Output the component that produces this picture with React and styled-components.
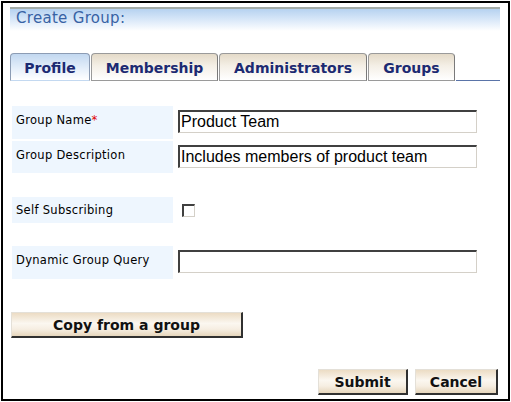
import React, { useState } from 'react'
import styled, { createGlobalStyle } from 'styled-components'

const GlobalStyle = createGlobalStyle`
  html, body {
    margin: 0;
    padding: 0;
    background: #fff;
  }
`

const Frame = styled.div`
  box-sizing: border-box;
  margin: 1px;
  width: 509px;
  height: 400px;
  border: 2px solid #000;
  padding: 4px 8px 0 7px;
  display: flex;
  flex-direction: column;
  font-family: 'DejaVu Sans', Verdana, sans-serif;
`

const Header = styled.div`
  box-sizing: border-box;
  height: 24px;
  border-top: 2px solid #a4aca8;
  background: linear-gradient(to bottom, #b6d2f0 0%, #d6e6f8 45%, #ffffff 100%);
  color: #3762a4;
  font-size: 15px;
  line-height: 19px;
  padding-left: 6px;
  letter-spacing: 0.3px;
`

const TabBar = styled.div`
  display: flex;
  align-items: flex-end;
  margin-top: 22px;
  height: 28px;
`

const Tab = styled.div`
  box-sizing: border-box;
  width: ${(p) => p.w}px;
  height: 28px;
  border: 1px solid ${(p) => (p.active ? '#8c9cb4' : '#9a9a9a')};
  border-bottom: ${(p) => (p.active ? '1px solid transparent' : '1px solid #9a9a9a')};
  border-right-color: ${(p) => (p.active ? '#8c9cb4' : '#7a7a7a')};
  border-radius: 4px 4px 0 0;
  background: ${(p) =>
    p.active
      ? 'linear-gradient(to bottom, #c2d8f0 0%, #e4eefa 55%, #ffffff 100%)'
      : 'linear-gradient(to bottom, #e4dac8 0%, #f4efe6 45%, #ffffff 100%)'};
  color: #1c2a72;
  font-weight: bold;
  font-size: 14px;
  display: flex;
  align-items: center;
  justify-content: center;
  padding-top: 1px;
  margin-right: 1px;
`

const TabFill = styled.div`
  flex: 1;
  border-bottom: 1px solid #5a74a8;
`

const Form = styled.div`
  margin-top: 25px;
  padding-left: 2px;
  display: flex;
  flex-direction: column;
`

const Row = styled.div`
  display: flex;
  margin-top: ${(p) => p.gap || 0}px;
  height: ${(p) => p.h}px;
`

const Label = styled.div`
  box-sizing: border-box;
  width: 161px;
  background: #eef6fe;
  font-size: 11.5px;
  color: #000;
  padding: ${(p) => p.pt || 7}px 4px 0 4px;
  letter-spacing: 0.3px;
`

const Star = styled.span`
  color: #e00000;
`

const Field = styled.div`
  padding: ${(p) => p.pt || 4}px 0 0 ${(p) => p.pl || 5}px;
`

const TextInput = styled.input`
  box-sizing: border-box;
  width: 299px;
  height: 23px;
  border-style: solid;
  border-width: 2px 1px 1px 2px;
  border-color: #404040 #d4d0c8 #d4d0c8 #404040;
  outline: none;
  padding: 0 1px;
  font-family: 'Liberation Sans', Arial, sans-serif;
  font-size: 16px;
  color: #000;
  background: #fff;
`

const Check = styled.span`
  box-sizing: border-box;
  display: block;
  width: 13px;
  height: 13px;
  border-style: solid;
  border-width: 2px 1px 1px 2px;
  border-color: #404040 #d4d0c8 #d4d0c8 #404040;
  background: #fff;
  cursor: pointer;
`

const Button = styled.button`
  box-sizing: border-box;
  width: ${(p) => p.w}px;
  height: 26px;
  border-style: solid;
  border-width: 1px 2px 2px 1px;
  border-color: #e4e0d8 #303030 #303030 #e4e0d8;
  background: linear-gradient(to bottom, #ecdcc4 0%, #fbf7f0 45%, #f6eee2 70%, #e6d6bc 100%);
  font-family: 'DejaVu Sans', Verdana, sans-serif;
  font-weight: bold;
  font-size: 14px;
  color: #111;
  padding: 0;
  cursor: pointer;
`

const CopyWrap = styled.div`
  margin-top: 33px;
  padding-left: 1px;
`

const Footer = styled.div`
  display: flex;
  justify-content: flex-end;
  gap: 7px;
  margin-top: 31px;
  padding-right: 2px;
`

const tabs = [
  { name: 'Profile', w: 80 },
  { name: 'Membership', w: 127 },
  { name: 'Administrators', w: 148 },
  { name: 'Groups', w: 87 },
]

const App = () => {
  const [active, setActive] = useState('Profile')
  const [name, setName] = useState('Product Team')
  const [desc, setDesc] = useState('Includes members of product team')
  const [query, setQuery] = useState('')
  const [subscribed, setSubscribed] = useState(false)

  return (
    <>
      <GlobalStyle />
      <Frame>
        <Header>Create Group:</Header>
        <TabBar>
          {tabs.map((t) => (
            <Tab
              key={t.name}
              w={t.w}
              active={active === t.name}
              onClick={() => setActive(t.name)}
            >
              {t.name}
            </Tab>
          ))}
          <TabFill />
        </TabBar>
        <Form>
          <Row h={33}>
            <Label>
              Group Name<Star>*</Star>
            </Label>
            <Field>
              <TextInput value={name} onChange={(e) => setName(e.target.value)} />
            </Field>
          </Row>
          <Row h={32} gap={2}>
            <Label pt={7}>Group Description</Label>
            <Field pt={4}>
              <TextInput value={desc} onChange={(e) => setDesc(e.target.value)} />
            </Field>
          </Row>
          <Row h={26} gap={24}>
            <Label pt={6}>Self Subscribing</Label>
            <Field pt={7} pl={9}>
              <Check onClick={() => setSubscribed(!subscribed)} />
            </Field>
          </Row>
          <Row h={33} gap={23}>
            <Label pt={7}>Dynamic Group Query</Label>
            <Field pt={4}>
              <TextInput value={query} onChange={(e) => setQuery(e.target.value)} />
            </Field>
          </Row>
        </Form>
        <CopyWrap>
          <Button w={232}>Copy from a group</Button>
        </CopyWrap>
        <Footer>
          <Button w={90}>Submit</Button>
          <Button w={83}>Cancel</Button>
        </Footer>
      </Frame>
    </>
  )
}

export default App
